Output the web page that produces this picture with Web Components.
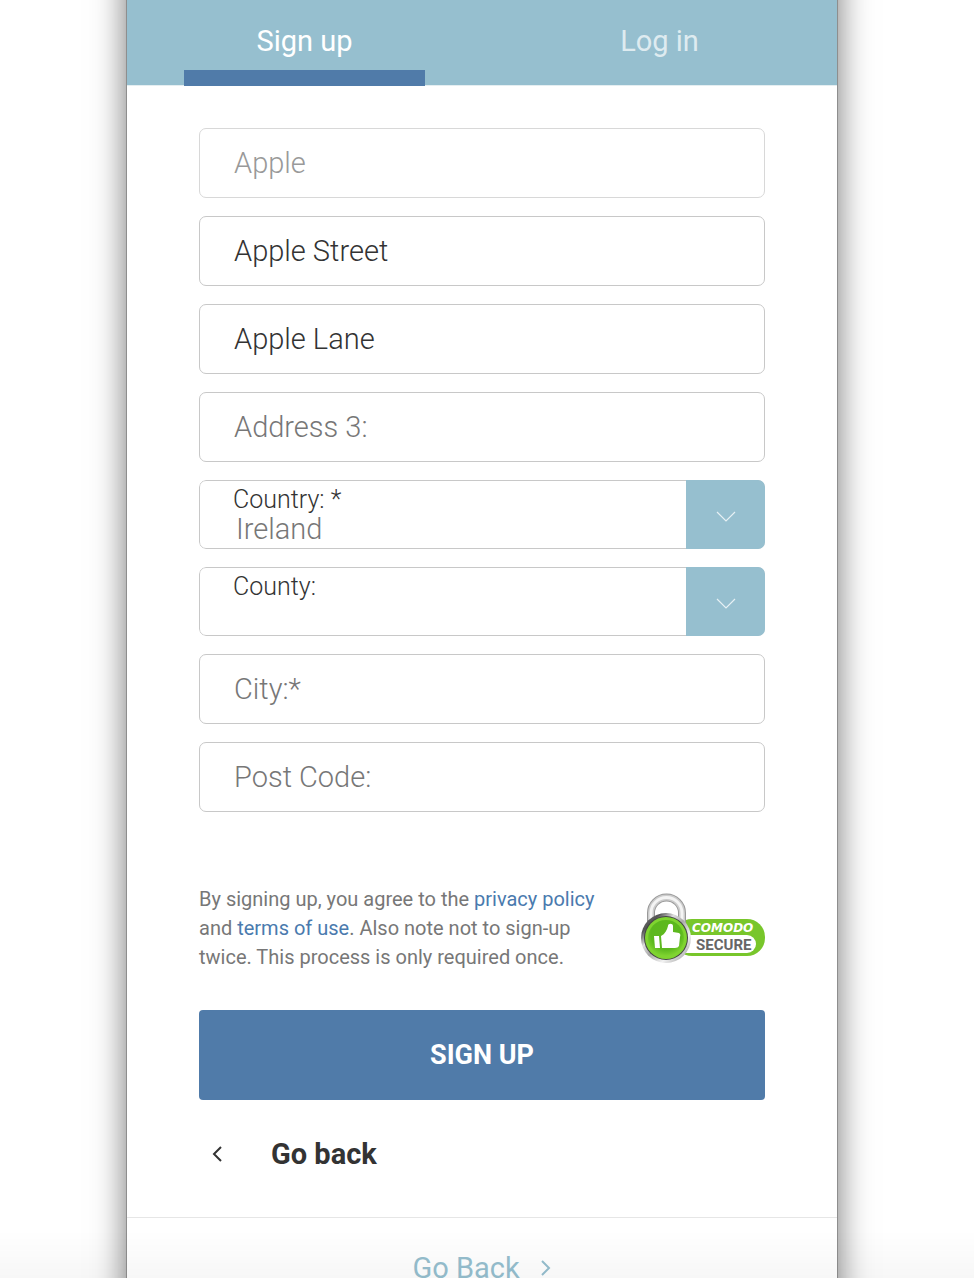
<!DOCTYPE html>
<html lang="en">
<head>
<meta charset="utf-8">
<meta name="viewport" content="width=device-width, initial-scale=1">
<title>Sign up</title>
<style>
    html {
        scrollbar-width: none;
    }

    body {
        margin: 0;
        padding-right: 10px;
        background: #fff;
        color: #333;
        font-family: Roboto, "Liberation Sans", sans-serif;
    }
</style>
</head>
<body>
<signup-page></signup-page>

<script>
function makeTemplate(html) {
    const template = document.createElement('template');
    template.innerHTML = html;
    return template;
}

class BaseElement extends HTMLElement {
    constructor() {
        super();
        this.attachShadow({ mode: 'open' });
        this.shadowRoot.appendChild(this.constructor.template.content.cloneNode(true));
    }
}

class TabBar extends BaseElement {
    static template = makeTemplate(`
        <style>
            :host {
                display: block;
                border-bottom: 1px solid #e4eef1;
                background: #96bfcf;
                background-clip: padding-box;
            }

            nav {
                display: grid;
                grid-template-columns: 1fr 1fr;
                margin-bottom: -1px;
            }

            a {
                display: flex;
                flex-direction: column;
                align-items: center;
                color: rgba(255, 255, 255, 0.7);
                font-size: 29px;
                line-height: 34px;
                padding-top: 24px;
                text-decoration: none;
            }

            a::after {
                content: '';
                width: 68%;
                height: 16px;
                margin-top: 12px;
            }

            a[aria-current] {
                color: #fff;
            }

            a[aria-current]::after {
                background: #507ba9;
            }
        </style>
        <nav aria-label="Account">
            <a href="#signup" aria-current="page">Sign up</a>
            <a href="#login">Log in</a>
        </nav>
    `);
}

class TextField extends BaseElement {
    static template = makeTemplate(`
        <style>
            :host {
                display: block;
            }

            input {
                display: block;
                box-sizing: border-box;
                width: 100%;
                height: 70px;
                padding: 0 34px;
                border: 1px solid #c8c8c8;
                border-radius: 7px;
                background: #fff;
                color: #333;
                font: 300 29px Roboto, "Liberation Sans", sans-serif;
            }

            input::placeholder {
                color: #777;
                opacity: 1;
            }

            input:disabled {
                border-color: #d8d8d8;
                color: #999;
            }

            input:focus {
                outline: 2px solid #96bfcf;
            }
        </style>
        <input type="text">
    `);

    connectedCallback() {
        const input = this.shadowRoot.querySelector('input');
        input.setAttribute('aria-label', this.getAttribute('label'));
        input.placeholder = this.getAttribute('label');
        input.value = this.getAttribute('value') || '';
        input.disabled = this.hasAttribute('disabled');
    }
}

class SelectField extends BaseElement {
    static template = makeTemplate(`
        <style>
            :host {
                display: grid;
                grid-template-columns: 1fr 79px;
                grid-template-rows: 69px;
                border-radius: 7px;
                overflow: hidden;
            }

            select {
                grid-area: 1 / 1 / 2 / 3;
                box-sizing: border-box;
                width: 100%;
                height: 100%;
                padding: 28px 80px 0 36px;
                border: 1px solid #c8c8c8;
                border-radius: 7px;
                appearance: none;
                background: #fff;
                color: #777;
                font: 300 29px Roboto, "Liberation Sans", sans-serif;
            }

            label {
                grid-area: 1 / 1;
                z-index: 1;
                padding: 5px 0 0 34px;
                font-size: 25px;
                font-weight: 300;
                line-height: 30px;
                pointer-events: none;
            }

            .arrow {
                grid-area: 1 / 2;
                z-index: 1;
                display: flex;
                align-items: center;
                justify-content: center;
                padding-top: 2px;
                background: #96bfcf;
                pointer-events: none;
            }
        </style>
        <label for="control"></label>
        <select id="control"></select>
        <span class="arrow">
            <svg width="20" height="12" viewBox="0 0 20 12" fill="none" stroke="#e6f0f4" stroke-width="1.2" aria-hidden="true">
                <path d="M1 2L10 11L19 2"></path>
            </svg>
        </span>
    `);

    connectedCallback() {
        this.shadowRoot.querySelector('label').textContent = this.getAttribute('label');
        const select = this.shadowRoot.querySelector('select');
        select.replaceChildren(new Option(this.getAttribute('value') || ''));
    }
}

class SecureBadge extends BaseElement {
    static template = makeTemplate(`
        <style>
            :host {
                display: block;
                flex: none;
            }

            svg {
                display: block;
            }

            .brand {
                font: italic 700 12px "DejaVu Sans", sans-serif;
            }

            .secure {
                font: 700 15px Roboto, "Liberation Sans", sans-serif;
            }
        </style>
        <svg width="126" height="72" viewBox="0 0 126 72" role="img" aria-label="Comodo Secure">
            <defs>
                <linearGradient id="rim" x1="0" y1="0" x2="1" y2="1">
                    <stop offset="0" stop-color="#777"></stop>
                    <stop offset=".2" stop-color="#555"></stop>
                    <stop offset=".35" stop-color="#ddd"></stop>
                    <stop offset=".5" stop-color="#aaa"></stop>
                    <stop offset=".7" stop-color="#f2f2f2"></stop>
                    <stop offset="1" stop-color="#888"></stop>
                </linearGradient>
                <radialGradient id="green" cx=".5" cy=".4" r=".6">
                    <stop offset="0" stop-color="#5fb81f"></stop>
                    <stop offset=".7" stop-color="#5cb81e"></stop>
                    <stop offset="1" stop-color="#7fd430"></stop>
                </radialGradient>
            </defs>
            <rect x="35" y="26" width="91" height="37" rx="18" fill="#78c62b"></rect>
            <path d="M40 42H108A9 9 0 0 1 108 60H40Z" fill="#fff"></path>
            <g fill="none">
                <path d="M12 40V20A15 15 0 0 1 43 20V40" stroke="#999" stroke-width="8"></path>
                <path d="M12 40V20A15 15 0 0 1 43 20V40" stroke="#ccc" stroke-width="6"></path>
                <path d="M12 40V20A15 15 0 0 1 43 20V40" stroke="#f4f4f4" stroke-width="3"></path>
            </g>
            <circle cx="27" cy="45" r="25" fill="url(#rim)"></circle>
            <circle cx="27" cy="45" r="22" fill="#444"></circle>
            <circle cx="27" cy="45" r="21" fill="#7fd430"></circle>
            <circle cx="27" cy="45" r="18" fill="url(#green)"></circle>
            <path d="M15 43H20L21 55H16Z" fill="#fff"></path>
            <path d="M22 43C26 41 28 37 29 33C29 30 34 30 34 33V39L40 40Q42 41 41 44L40 53Q39 55 36 55H23Z" fill="#fff"></path>
            <text class="brand" x="53" y="39" fill="#fff">COMODO</text>
            <text class="secure" x="57" y="57" fill="#666">SECURE</text>
        </svg>
    `);
}

class SubmitButton extends BaseElement {
    static template = makeTemplate(`
        <style>
            :host {
                display: block;
            }

            button {
                display: block;
                width: 100%;
                height: 90px;
                padding: 0;
                border: 0;
                border-radius: 4px;
                background: #507ba9;
                color: #fff;
                font: 700 27px Roboto, "Liberation Sans", sans-serif;
                cursor: pointer;
            }
        </style>
        <button type="submit"><slot></slot></button>
    `);
}

class SignupPage extends BaseElement {
    static template = makeTemplate(`
        <style>
            /* starts above the window so the side shadows stay even at the top */
            :host {
                display: block;
                box-sizing: border-box;
                max-width: 712px;
                min-height: calc(100vh + 40px);
                margin: -40px auto 0;
                padding-top: 40px;
                border: 1px solid #8e8e8e;
                border-width: 0 1px;
                box-shadow: 0 0 30px rgba(0, 0, 0, 0.5), 0 0 50px rgba(0, 0, 0, 0.05);
            }

            form {
                padding: 42px 72px 45px;
            }

            .fields {
                display: grid;
                gap: 18px;
            }

            .terms {
                display: flex;
                align-items: center;
                justify-content: space-between;
                gap: 24px;
                margin: 73px 0 38px;
            }

            p {
                max-width: 410px;
                margin: 0;
                color: #777;
                font-size: 20px;
                line-height: 29px;
            }

            p a {
                color: #4a7aae;
                text-decoration: none;
            }

            .back {
                display: inline-flex;
                align-items: center;
                gap: 48px;
                margin-top: 36px;
                padding-left: 12px;
                color: #333;
                font-size: 29px;
                font-weight: 700;
                line-height: 36px;
                text-decoration: none;
            }

            footer {
                padding: 32px 0 48px;
                border-top: 1px solid #e6e6e6;
                text-align: center;
            }

            footer a {
                display: inline-flex;
                align-items: center;
                gap: 20px;
                color: #96bfcf;
                font-size: 29px;
                line-height: 36px;
                text-decoration: none;
            }

            /* soft shade along the bottom edge of the window */
            .shade {
                position: fixed;
                inset: auto 0 0;
                height: 48px;
                background: linear-gradient(rgba(0, 0, 0, 0), rgba(0, 0, 0, 0.03));
                pointer-events: none;
            }
        </style>
        <tab-bar></tab-bar>
        <form>
            <div class="fields">
                <text-field label="Company" value="Apple" disabled></text-field>
                <text-field label="Address 1:" value="Apple Street"></text-field>
                <text-field label="Address 2:" value="Apple Lane"></text-field>
                <text-field label="Address 3:"></text-field>
                <select-field label="Country: *" value="Ireland"></select-field>
                <select-field label="County:"></select-field>
                <text-field label="City:*"></text-field>
                <text-field label="Post Code:"></text-field>
            </div>
            <div class="terms">
                <p>By signing up, you agree to the <a href="#privacy">privacy policy</a> and <a href="#terms">terms of use</a>. Also note not to sign-up twice. This process is only required once.</p>
                <secure-badge></secure-badge>
            </div>
            <submit-button>SIGN UP</submit-button>
            <a class="back" href="#back">
                <svg width="12" height="18" viewBox="0 0 12 18" fill="none" stroke="currentColor" stroke-width="2" aria-hidden="true">
                    <path d="M10 2L3 9L10 16"></path>
                </svg>
                Go back
            </a>
        </form>
        <footer>
            <a href="#back">
                Go Back
                <svg width="12" height="18" viewBox="0 0 12 18" fill="none" stroke="currentColor" stroke-width="2" aria-hidden="true">
                    <path d="M2 2L9 9L2 16"></path>
                </svg>
            </a>
        </footer>
        <div class="shade"></div>
    `);
}

customElements.define('tab-bar', TabBar);
customElements.define('text-field', TextField);
customElements.define('select-field', SelectField);
customElements.define('secure-badge', SecureBadge);
customElements.define('submit-button', SubmitButton);
customElements.define('signup-page', SignupPage);
</script>
</body>
</html>
